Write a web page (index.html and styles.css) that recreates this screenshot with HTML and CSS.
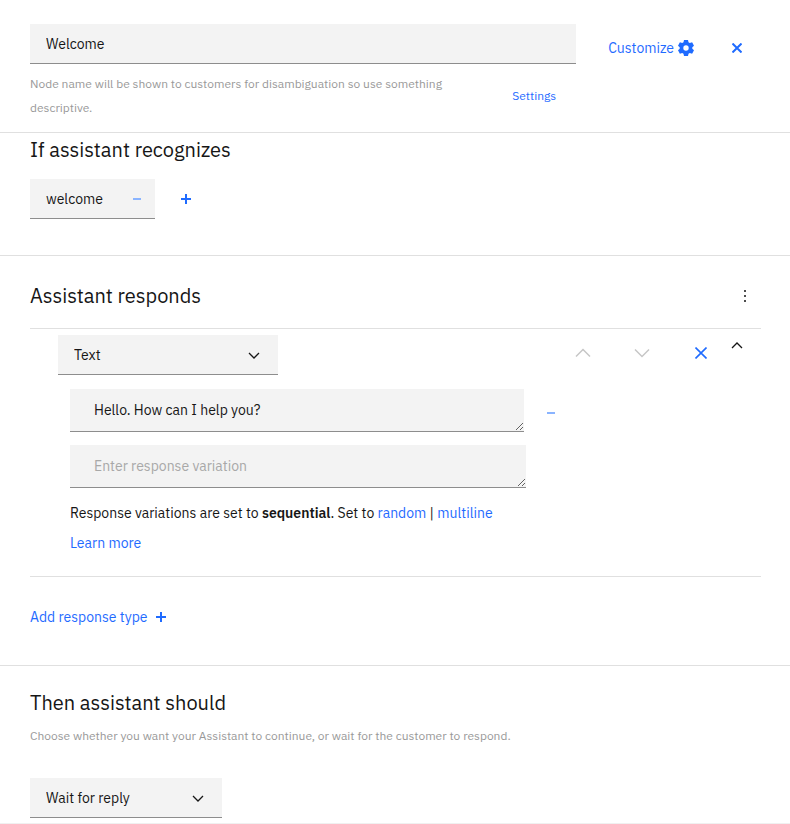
FILE: index.html
```html
<!DOCTYPE html>
<html lang="en">
	<head>
		<meta charset="utf-8">
		<title>Edit node</title>

		<link rel="stylesheet" href="styles.css">
	</head>
	<body>
		<header class="node-header">
			<div class="node-name">
				<input class="field" type="text" value="Welcome" aria-label="Node name">
				<div class="node-help">
					<p class="hint">Node name will be shown to customers for disambiguation so use something descriptive.</p>
					<a class="settings" href="#">Settings</a>
				</div>
			</div>
			<div class="node-actions">
				<button class="btn customize" type="button">Customize
					<svg width="16" height="16" viewBox="0 0 16 16"><path fill="currentColor" fill-rule="evenodd" d="M6 0h4l.5 2.3 1.3.8 2.3-.8 1.9 3.4L14.300 7.200v1.600L16 10.300l-1.900 3.400-2.300-.8-1.300.8L10 16H6l-.5-2.300-1.300-.8-2.300.8L0 10.300l1.700-1.500V7.200L0 5.700l1.900-3.400 2.300.8 1.300-.8zM8 5.300a2.700 2.700 0 1 0 0 5.400 2.700 2.700 0 0 0 0-5.400z"/></svg>
				</button>
				<button class="btn icon" type="button" aria-label="Close">
					<svg width="10" height="10" viewBox="0 0 10 10"><path class="line" stroke-width="2" d="M.5.5l9 9M9.500.5l-9 9"/></svg>
				</button>
			</div>
		</header>

		<section class="recognizes">
			<h2>If assistant recognizes</h2>
			<div class="conditions">
				<div class="condition">
					<span>welcome</span>
					<button class="btn icon light" type="button" aria-label="Remove condition">
						<svg width="8" height="2" viewBox="0 0 8 2"><path fill="currentColor" d="M0 0h8v2H0z"/></svg>
					</button>
				</div>
				<button class="btn icon" type="button" aria-label="Add condition">
					<svg width="10" height="10" viewBox="0 0 10 10"><path fill="currentColor" d="M4 0h2v4h4v2H6v4H4V6H0V4h4z"/></svg>
				</button>
			</div>
		</section>

		<section class="responds">
			<div class="responds-head">
				<h2>Assistant responds</h2>
				<button class="btn icon menu" type="button" aria-label="Options">
					<svg width="2" height="12" viewBox="0 0 2 12"><path fill="currentColor" d="M0 0h2v2H0zM0 5h2v2H0zM0 10h2v2H0z"/></svg>
				</button>
			</div>
			<div class="response">
				<div class="response-bar">
					<div class="select type">
						<select class="field" aria-label="Response type">
							<option>Text</option>
						</select>
						<svg width="12" height="7" viewBox="0 0 12 7"><path class="line" stroke-width="1.300" d="M1 1l5 5 5-5"/></svg>
					</div>
					<div class="response-tools">
						<button class="btn icon muted" type="button" aria-label="Move up">
							<svg width="16" height="10" viewBox="0 0 16 10"><path class="line" stroke-width="1.500" d="M1 8.500l7-7 7 7"/></svg>
						</button>
						<button class="btn icon muted" type="button" aria-label="Move down">
							<svg width="16" height="10" viewBox="0 0 16 10"><path class="line" stroke-width="1.500" d="M1 1.500l7 7 7-7"/></svg>
						</button>
						<button class="btn icon" type="button" aria-label="Delete response">
							<svg width="12" height="12" viewBox="0 0 12 12"><path class="line" stroke-width="1.600" d="M.5.5l11 11M11.500.5l-11 11"/></svg>
						</button>
					</div>
					<button class="btn icon dark collapse" type="button" aria-label="Collapse">
						<svg width="12" height="7" viewBox="0 0 12 7"><path class="line" stroke-width="1.300" d="M1 6l5-5 5 5"/></svg>
					</button>
				</div>
				<div class="variations">
					<div class="variation">
						<textarea class="field" rows="1" aria-label="Response variation 1">Hello. How can I help you?</textarea>
						<button class="btn icon light" type="button" aria-label="Remove variation">
							<svg width="8" height="2" viewBox="0 0 8 2"><path fill="currentColor" d="M0 0h8v2H0z"/></svg>
						</button>
					</div>
					<textarea class="field new-variation" rows="1" placeholder="Enter response variation" aria-label="New response variation"></textarea>
					<p>Response variations are set to <strong>sequential</strong>. Set to <a href="#">random</a> | <a href="#">multiline</a></p>
					<p><a href="#">Learn more</a></p>
				</div>
			</div>
			<button class="btn add" type="button">Add response type
				<svg width="10" height="10" viewBox="0 0 10 10"><path fill="currentColor" d="M4 0h2v4h4v2H6v4H4V6H0V4h4z"/></svg>
			</button>
		</section>

		<section class="then">
			<h2>Then assistant should</h2>
			<p class="hint">Choose whether you want your Assistant to continue, or wait for the customer to respond.</p>
			<div class="select action">
				<select class="field" aria-label="Next action">
					<option>Wait for reply</option>
				</select>
				<svg width="12" height="7" viewBox="0 0 12 7"><path class="line" stroke-width="1.300" d="M1 1l5 5 5-5"/></svg>
			</div>
		</section>
	</body>
</html>
```
FILE: styles.css
```css
* {
	margin: 0;
	padding: 0;
	box-sizing: border-box;
}

body {
	background: #fff;
	color: #161616;
	font-family: "IBM Plex Sans", Roboto, sans-serif;
	font-size: 14px;
	line-height: 30px;
}

a {
	color: #1f6bff;
	text-decoration: none;
}

h2 {
	font-size: 20px;
	font-weight: 400;
	line-height: 28px;
}

strong {
	font-weight: 600;
}

svg {
	display: block;
	flex: none;
}

.line {
	fill: none;
	stroke: currentColor;
}

.hint,
.settings {
	font-family: "IBM Plex Sans", "Open Sans", sans-serif;
	font-size: 12px;
	line-height: 24px;
}

.hint {
	color: #999;
}

.field {
	display: block;
	width: 100%;
	height: 40px;
	padding: 0 16px;
	border: 0;
	border-bottom: 1px solid #8d8d8d;
	border-radius: 0;
	outline: 0;
	background: #f3f3f3;
	color: #161616;
	font: inherit;
	appearance: none;
}

textarea.field {
	height: 43px;
	padding: 11px 24px;
	line-height: 20px;
	resize: both;
}

.field::placeholder {
	color: #a8a8a8;
}

.btn {
	display: flex;
	align-items: center;
	border: 0;
	background: none;
	color: #1f6bff;
	font: inherit;
	cursor: pointer;
}

.icon {
	justify-content: center;
	flex: none;
	width: 24px;
	height: 24px;
}

.light {
	color: #8ab4ff;
}

.dark {
	color: #161616;
}

.menu {
	color: #4d4d4d;
}

.muted {
	color: #c6c6c6;
}

.select {
	position: relative;
}

.select svg {
	position: absolute;
	top: 17px;
	right: 18px;
	pointer-events: none;
}

/* node name */
.node-header {
	display: flex;
	padding: 24px 41px 12px 30px;
	border-bottom: 1px solid #e0e0e0;
}

.node-name {
	flex: 1;
}

.node-help {
	display: flex;
	align-items: center;
	gap: 32px;
	padding: 8px 20px 0 0;
}

.node-help .hint {
	flex: 1;
}

.node-actions {
	display: flex;
	align-items: center;
	gap: 31px;
	height: 48px;
	padding-left: 32px;
}

.customize {
	gap: 4px;
}

/* conditions */
.recognizes {
	padding: 3px 30px 36px;
	border-bottom: 1px solid #e0e0e0;
}

.conditions {
	display: flex;
	align-items: center;
	gap: 19px;
	margin-top: 15px;
}

.condition {
	display: flex;
	align-items: center;
	justify-content: space-between;
	width: 125px;
	height: 40px;
	padding: 0 6px 0 16px;
	border-bottom: 1px solid #8d8d8d;
	background: #f3f3f3;
}

/* responses */
.responds {
	padding: 26px 29px 33px 30px;
	border-bottom: 1px solid #e0e0e0;
}

.responds-head {
	display: flex;
	align-items: center;
	justify-content: space-between;
	padding: 0 4px 18px 0;
}

.response {
	padding: 6px 0 18px 28px;
	border-top: 1px solid #e0e0e0;
	border-bottom: 1px solid #e0e0e0;
}

.response-bar {
	display: flex;
	padding-right: 12px;
}

.type {
	width: 220px;
}

.response-tools {
	display: flex;
	gap: 35px;
	margin: 6px 12px 0 auto;
}

.collapse {
	margin-top: -2px;
}

.variations {
	padding: 14px 0 0 12px;
}

.variation {
	display: flex;
	align-items: center;
	gap: 15px;
	max-width: 493px;
	margin-bottom: 13px;
}

.variation .icon {
	padding-top: 4px;
}

.new-variation {
	max-width: 456px;
	margin-bottom: 10px;
}

.add {
	gap: 8px;
	margin-top: 25px;
}

/* next step */
.then {
	padding: 23px 30px 5px;
	border-bottom: 1px solid #f0f0f0;
}

.then .hint {
	padding: 7px 0 30px;
}

.action {
	width: 192px;
}
```
